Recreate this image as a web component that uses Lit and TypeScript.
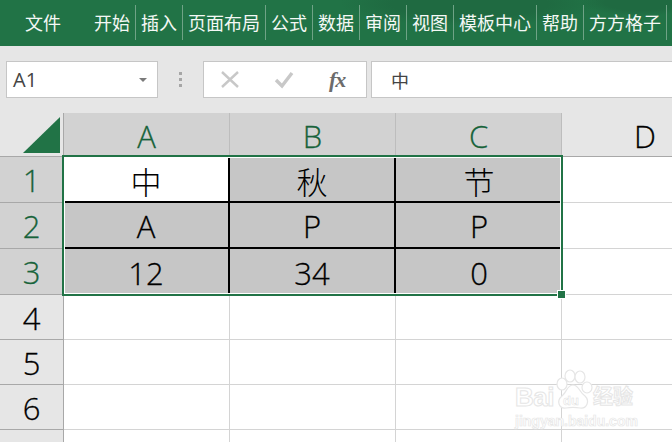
import { LitElement, html, css, svg } from "lit";
import { customElement } from "lit/decorators.js";

const TABS = ["开始", "插入", "页面布局", "公式", "数据", "审阅", "视图", "模板中心", "帮助", "方方格子"];
const ROWS: { n: string; active: boolean; cells: string[] }[] = [
  { n: "1", active: true, cells: ["中", "秋", "节"] },
  { n: "2", active: true, cells: ["A", "P", "P"] },
  { n: "3", active: true, cells: ["12", "34", "0"] },
  { n: "4", active: false, cells: [] },
  { n: "5", active: false, cells: [] },
  { n: "6", active: false, cells: [] },
  { n: "7", active: false, cells: [] },
];

@customElement("app-root")
export class AppRoot extends LitElement {
  static styles = css`
    :host {
      display: block;
      width: 672px;
      height: 442px;
      overflow: hidden;
      position: relative;
      background: #fff;
      font-family: "Open Sans", "Noto Sans CJK SC", sans-serif;
    }
    .ribbon {
      height: 46px;
      box-sizing: border-box;
      display: flex;
      align-items: flex-start;
      padding: 5px 0 0 25px;
      color: #f4f8f5;
      background:
        radial-gradient(ellipse 130px 22px at 470px 4px, #1f6a41 60%, transparent 100%),
        radial-gradient(ellipse 60px 14px at 640px 2px, #1f6a41 60%, transparent 100%),
        #217346;
      font-family: "Noto Sans CJK SC", sans-serif;
      font-size: 18px;
    }
    .file {
      width: 69px;
      line-height: 35px;
      flex: none;
      height: 35px;
      white-space: nowrap;
    }
    .tab {
      flex: none;
      height: 35px;
      line-height: 35px;
      padding: 0 5px;
      border-right: 1px solid #6fa386;
      white-space: nowrap;
    }
    .tab.first {
      padding-left: 0;
    }
    .bar {
      height: 67px;
      box-sizing: border-box;
      background: #e6e6e6;
      padding: 15px 0 0 6px;
      display: flex;
      align-items: flex-start;
    }
    .box {
      height: 37px;
      box-sizing: border-box;
      background: #fff;
      border: 1px solid #c6c6c6;
      display: flex;
      align-items: center;
      flex: none;
    }
    .name {
      width: 152px;
      padding: 0 10px 0 6px;
      justify-content: space-between;
      font-size: 20px;
      color: #444;
    }
    .caret {
      width: 0;
      height: 0;
      border-left: 4px solid transparent;
      border-right: 4px solid transparent;
      border-top: 4px solid #7a7a7a;
    }
    .grip {
      width: 45px;
      flex: none;
      height: 37px;
      display: flex;
      align-items: center;
      justify-content: center;
    }
    .btns {
      width: 164px;
      justify-content: flex-start;
      padding-left: 16px;
    }
    .btns svg {
      display: block;
      flex: none;
    }
    .check {
      margin-left: 34px;
    }
    .fx {
      font-family: "Liberation Serif", serif;
      font-style: italic;
      font-weight: bold;
      font-size: 22px;
      color: #6c6c6c;
      margin-left: 35px;
      letter-spacing: -1px;
    }
    .input {
      margin-left: 4px;
      flex: 1;
      border-right: none;
      padding-left: 19px;
      font-family: "Noto Sans CJK SC", sans-serif;
      font-size: 18px;
      color: #444;
    }
    .sheet {
      display: grid;
      grid-template-columns: 64px 166px 166px 166px 110px;
      grid-template-rows: 44px 46px 46px 46px 45px 45px 45px 45px;
      position: relative;
      font-weight: 300;
      line-height: 1;
      color: #000;
      -webkit-text-stroke: 0.3px currentColor;
    }
    .corner {
      box-sizing: border-box;
      background: #e6e6e6;
      border-right: 1px solid #a8a8a8;
      border-bottom: 1px solid #a8a8a8;
      display: flex;
      align-items: flex-start;
      justify-content: flex-end;
      padding: 4px 3px 0 0;
    }
    .col {
      box-sizing: border-box;
      display: flex;
      align-items: center;
      justify-content: center;
      padding-top: 3px;
      font-size: 31px;
      background: #e6e6e6;
      border-right: 1px solid #bdbdbd;
      border-bottom: 1px solid #a8a8a8;
    }
    .col.on {
      background: #d2d2d2;
      color: #17633a;
    }
    .col.d {
      border-right: none;
      width: 166px;
    }
    .row {
      box-sizing: border-box;
      display: flex;
      align-items: center;
      justify-content: center;
      padding-top: 2px;
      font-size: 31px;
      background: #e6e6e6;
      border-right: 1px solid #a8a8a8;
      border-bottom: 1px solid #a8a8a8;
    }
    .row.on {
      background: #d2d2d2;
      color: #17633a;
    }
    .cell {
      box-sizing: border-box;
      border-right: 1px solid #d4d4d4;
      border-bottom: 1px solid #d4d4d4;
      background: #fff;
    }
    .cell.data {
      background: #c6c6c6;
      border-right: 2px solid #000;
      border-bottom: 2px solid #000;
      display: flex;
      align-items: center;
      justify-content: center;
      padding-top: 2px;
      font-size: 31px;
    }
    .cell.data.cjk {
      font-family: "Noto Sans CJK SC", sans-serif;
      font-weight: 300;
      -webkit-text-stroke: 0;
    }
    .cell.data.white {
      background: #fff;
    }
    .cell.data.last {
      border-right: none;
    }
    .cell.data.bottom {
      border-bottom: none;
    }
    .cell.free {
      border-right: none;
    }
    .selection {
      position: absolute;
      left: 62px;
      top: 42px;
      width: 501px;
      height: 141px;
      box-sizing: border-box;
      border: 2px solid #217346;
      box-shadow: inset 0 0 0 1px #fff;
      pointer-events: none;
    }
    .handle {
      position: absolute;
      right: -5px;
      bottom: -5px;
      width: 7px;
      height: 7px;
      background: #217346;
      border: 1px solid #fff;
    }
    .mark {
      position: absolute;
      left: 514px;
      top: 368px;
      width: 130px;
      height: 62px;
      color: #fff;
      font-family: "Liberation Sans", sans-serif;
      -webkit-text-stroke: 1px #e6e6e6;
      pointer-events: none;
    }
    .mark svg {
      position: absolute;
      left: 40px;
      top: 0;
    }
    .bai {
      position: absolute;
      left: 1px;
      top: 15px;
      font-size: 26px;
      font-weight: bold;
      line-height: 28px;
      letter-spacing: -0.5px;
    }
    .du {
      position: absolute;
      left: 49px;
      top: 26px;
      font-size: 13px;
      line-height: 14px;
      font-weight: bold;
      -webkit-text-stroke: 0.5px #dedede;
    }
    .jy {
      position: absolute;
      left: 79px;
      top: 15px;
      font-family: "Noto Sans CJK SC", sans-serif;
      font-size: 20px;
      line-height: 26px;
      font-weight: bold;
    }
    .url {
      position: absolute;
      left: 1px;
      top: 45px;
      font-size: 14px;
      line-height: 16px;
      font-weight: bold;
      white-space: nowrap;
      -webkit-text-stroke: 0.7px #e6e6e6;
    }
  `;

  private cell(text: string, r: number, c: number) {
    const cls = [
      "cell",
      "data",
      r === 0 ? "cjk" : "",
      r === 0 && c === 0 ? "white" : "",
      c === 2 ? "last" : "",
      r === 2 ? "bottom" : "",
    ].join(" ");
    return html`<div class=${cls}>${text}</div>`;
  }

  render() {
    return html`
      <div class="ribbon">
        <div class="file">文件</div>
        ${TABS.map((t, i) => html`<div class="tab ${i === 0 ? "first" : ""}">${t}</div>`)}
      </div>
      <div class="bar">
        <div class="box name"><span>A1</span><span class="caret"></span></div>
        <div class="grip">
          <svg width="4" height="16" viewBox="0 0 4 16">
            <rect width="3" height="3" x="0" y="0" fill="#a6a6a6"></rect>
            <rect width="3" height="3" x="0" y="6" fill="#a6a6a6"></rect>
            <rect width="3" height="3" x="0" y="12" fill="#a6a6a6"></rect>
          </svg>
        </div>
        <div class="box btns">
          <svg width="20" height="20" viewBox="0 0 20 20">
            ${svg`<path d="M2 2 L18 17 M18 2 L2 17" stroke="#c8c8c8" stroke-width="2.4" fill="none"></path>`}
          </svg>
          <svg class="check" width="20" height="20" viewBox="0 0 20 20">
            ${svg`<path d="M2 10 L8 16 L18 3" stroke="#c8c8c8" stroke-width="3.4" fill="none"></path>`}
          </svg>
          <span class="fx">fx</span>
        </div>
        <div class="box input">中</div>
      </div>
      <div class="sheet">
        <div class="corner">
          <svg width="37" height="36" viewBox="0 0 37 36">
            ${svg`<path d="M37 0 V36 H0 Z" fill="#217346"></path>`}
          </svg>
        </div>
        <div class="col on">A</div>
        <div class="col on">B</div>
        <div class="col on">C</div>
        <div class="col d">D</div>
        ${ROWS.map(
          (row, r) => html`
            <div class="row ${row.active ? "on" : ""}">${row.n}</div>
            ${row.active
              ? row.cells.map((t, c) => this.cell(t, r, c))
              : html`<div class="cell"></div>
                  <div class="cell"></div>
                  <div class="cell"></div>`}
            <div class="cell free"></div>
          `
        )}
        <div class="selection"><div class="handle"></div></div>
      </div>
      <div class="mark">
        <svg width="60" height="48" viewBox="0 0 60 48">
          ${svg`
            <g fill="#fff" stroke="#e6e6e6" stroke-width="1.2">
              <ellipse cx="8" cy="16" rx="5" ry="6"></ellipse>
              <ellipse cx="16" cy="8" rx="5" ry="6"></ellipse>
              <ellipse cx="26" cy="9" rx="5" ry="6"></ellipse>
              <ellipse cx="33" cy="19.5" rx="5" ry="5.5"></ellipse>
              <path d="M19 17 C13 17 13 24 8 28 C2 33 5 41 12 40 C17 39 21 39 26 40 C33 41 36 33 31 28 C25 24 25 17 19 17 Z"></path>
            </g>
          `}
        </svg>
        <span class="bai">Bai</span>
        <span class="du">du</span>
        <span class="jy">经验</span>
        <span class="url">jingyan.baidu.com</span>
      </div>
    `;
  }
}
